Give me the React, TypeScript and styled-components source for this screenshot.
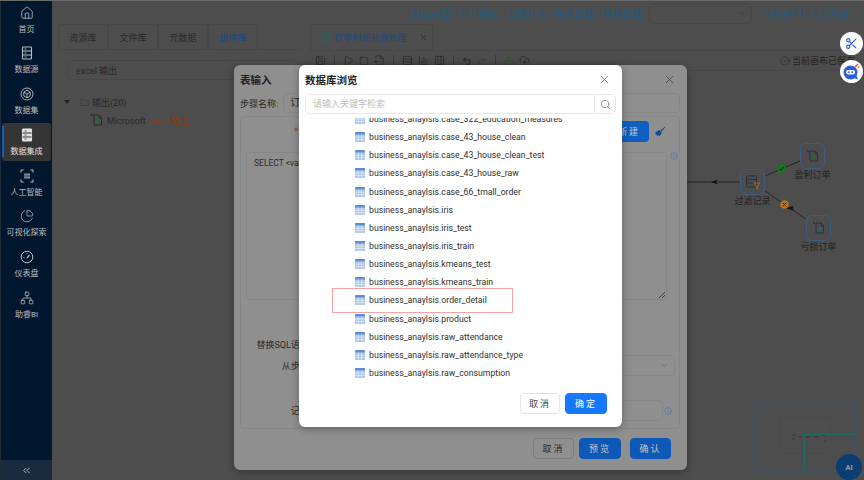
import React from 'react';
import styled, { createGlobalStyle } from 'styled-components';
import {
  BarChart3,
  ChartPie,
  ChevronDown,
  ChevronsLeft,
  CircleCheck,
  CloudUpload,
  Columns3,
  FileOutput,
  Folder,
  Info,
  House,
  LockOpen,
  Network,
  Play,
  Redo2,
  Rows3,
  Save,
  Scissors,
  Search,
  Square,
  Undo2,
  X,
} from 'lucide-react';

const FONT = 'Roboto, "Noto Sans CJK SC", sans-serif';

const GlobalStyle = createGlobalStyle`
  html, body {
    margin: 0;
    padding: 0;
    width: 864px;
    height: 480px;
    overflow: hidden;
    background: #4d4d4d;
    font-family: ${FONT};
  }
  * { box-sizing: border-box; }
`;

const Page = styled.div`
  position: relative;
  display: flex;
  width: 864px;
  height: 480px;
  overflow: hidden;
  background: #4d4d4d;
  border-top: 1px solid #6a6a6a;
`;

/* sidebar */
const Sidebar = styled.nav`
  display: flex;
  flex-direction: column;
  width: 52px;
  flex: none;
  background: #00172e;
  border-left: 1px solid #1e2a38;
`;

const SideList = styled.div`
  display: flex;
  flex-direction: column;
  gap: 2.8px;
  flex: 1;
  padding: 0 1px;
`;

const SideItem = styled.div<{ $active?: boolean }>`
  position: relative;
  display: flex;
  flex-direction: column;
  align-items: center;
  justify-content: center;
  gap: 5px;
  height: 38px;
  flex: none;
  border-radius: 3px;
  font-size: 8px;
  line-height: 10px;
  white-space: nowrap;
  color: ${(p) => (p.$active ? '#e2e2e2' : '#b9bec4')};
  background: ${(p) => (p.$active ? '#353535' : 'transparent')};

  ${(p) =>
    p.$active &&
    `&::before {
      content: '';
      position: absolute;
      left: 0;
      top: 3px;
      bottom: 4px;
      width: 2px;
      background: #0f5fc2;
    }`}
`;

const Collapse = styled.div`
  display: flex;
  align-items: center;
  justify-content: center;
  height: 20px;
  background: #1a2b40;
  color: #b9bec4;
`;

/* main */
const Main = styled.main`
  display: flex;
  flex-direction: column;
  flex: 1;
  min-width: 0;
`;

const Header = styled.header`
  display: flex;
  align-items: center;
  justify-content: flex-end;
  height: 23px;
  padding: 2px 4px 0 0;
  color: #205a7e;
  font-size: 10px;
`;

const NavLinks = styled.div`
  display: flex;
  gap: 7.7px;
  margin-right: 7px;
`;

const ProjectSelect = styled.div`
  display: flex;
  align-items: center;
  justify-content: flex-end;
  width: 103px;
  height: 20px;
  padding-right: 5px;
  border: 1px solid #474747;
  border-radius: 4px;
  color: #3c3c3c;
`;

const ProjectName = styled.div`
  display: flex;
  align-items: center;
  gap: 3px;
  width: 100px;
  margin-left: 8px;
  white-space: nowrap;
`;

const Workspace = styled.div`
  display: flex;
  flex: 1;
  min-height: 0;
`;

const LeftPanel = styled.section`
  width: 248px;
  flex: none;
  padding: 0 0 0 6px;
`;

const Tabs = styled.div`
  display: flex;
  height: 26px;
  border-bottom: 1px solid #474747;
`;

const Tab = styled.div<{ $active?: boolean }>`
  display: flex;
  align-items: center;
  justify-content: center;
  width: 50px;
  border: 1px solid #474747;
  border-bottom: none;
  border-radius: 3px 3px 0 0;
  font-size: 9px;
  color: ${(p) => (p.$active ? '#1a4a80' : '#2a2a2a')};
`;

const KeywordBox = styled.div`
  display: flex;
  align-items: center;
  height: 20px;
  margin: 10px 2px 0 9px;
  padding-left: 8px;
  border: 1px solid #474747;
  border-radius: 4px;
  font-size: 9px;
  color: #2a2a2a;
`;

const TreeRow = styled.div<{ $indent: number }>`
  display: flex;
  align-items: center;
  gap: 3px;
  height: 18px;
  padding-left: ${(p) => p.$indent}px;
  font-size: 9px;
  color: #2a2a2a;
`;

const TreeFirst = styled(TreeRow)`
  margin-top: 13px;
`;

const Caret = styled.span`
  width: 0;
  height: 0;
  margin-right: 7px;
  border: 3px solid transparent;
  border-top: 4px solid #222;
  border-bottom: none;
`;

const Hit = styled.span`
  color: #8c3b14;
`;

const RightPanel = styled.section`
  display: flex;
  flex-direction: column;
  flex: 1;
  min-width: 0;
  padding-left: 10px;
`;

const FlowTab = styled.div`
  display: flex;
  align-items: center;
  gap: 1px;
  width: 123px;
  height: 26px;
  padding-left: 10px;
  border: 1px solid #474747;
  border-bottom: none;
  border-radius: 3px 3px 0 0;
  font-size: 9px;
  color: #1a4a80;
`;

const FlowClose = styled.span`
  display: flex;
  margin-left: 12px;
  color: #2e2e2e;
`;

const Toolbar = styled.div`
  display: flex;
  align-items: center;
  gap: 5px;
  height: 20px;
  padding: 0 9px 0 5px;
  border-top: 1px solid #474747;
  color: #242424;
`;

const ToolDivider = styled.span`
  width: 1px;
  height: 11px;
  margin: 0 3px;
  background: #3a3a3a;
`;

const SavedNote = styled.div`
  display: flex;
  align-items: center;
  gap: 2px;
  margin-left: auto;
  font-size: 9px;
  white-space: nowrap;
  color: #222;
`;

const Canvas = styled.div`
  position: relative;
  flex: 1;
  border-top: 1px solid #474747;
  margin-left: -4px;
  background-image: radial-gradient(#414141 0.7px, transparent 0.8px);
  background-size: 17px 17px;
`;

const Edges = styled.svg`
  position: absolute;
  left: 0;
  top: 0;
`;

const Node = styled.div<{ $x: number; $y: number }>`
  position: absolute;
  left: ${(p) => p.$x}px;
  top: ${(p) => p.$y}px;
  display: flex;
  flex-direction: column;
  align-items: center;
  width: 25px;
  font-size: 9px;
  line-height: 11px;
  white-space: nowrap;
  color: #222;
`;

const NodeBox = styled.div`
  display: flex;
  align-items: center;
  justify-content: center;
  width: 25px;
  height: 26px;
  margin-bottom: 1px;
  border: 1px solid #3f5a80;
  border-radius: 6px;
  color: #243240;
  background: #4d4d4d;
`;

const NodeBadge = styled.span<{ $x: number; $y: number }>`
  position: absolute;
  left: ${(p) => p.$x}px;
  top: ${(p) => p.$y}px;
  display: flex;
`;

const MiniMap = styled.div`
  position: absolute;
  left: 450px;
  top: 331px;
  width: 99px;
  height: 69px;
  border: 1px solid #455060;
`;

const MiniContent = styled.div`
  position: absolute;
  left: 23px;
  top: 13px;
  width: 51px;
  height: 38px;
  border: 1px solid #4a4a4a;
`;

const MiniGraph = styled.svg`
  position: absolute;
  left: 34px;
  top: 29px;
`;

const MiniView = styled.div`
  position: absolute;
  left: 47px;
  top: 31px;
  right: -1px;
  bottom: -1px;
  border-left: 1px solid #1a6e62;
  border-top: 1px solid #1a6e62;
`;

const RoundTool = styled.div<{ $top: number }>`
  position: absolute;
  left: 840px;
  top: ${(p) => p.$top}px;
  display: flex;
  align-items: center;
  justify-content: center;
  width: 23px;
  height: 23px;
  border-radius: 50%;
  background: #fff;
  color: #2b5fe0;
`;

const AiBubble = styled.div`
  position: absolute;
  left: 836px;
  top: 453px;
  display: flex;
  align-items: center;
  justify-content: center;
  width: 26px;
  height: 26px;
  border-radius: 50%;
  background: #0a3d70;
  color: #8f9fb0;
  font-size: 8px;
  font-weight: 700;
`;

/* dialogs */
const Modal = styled.div<{ $x: number; $y: number; $w: number; $h: number; $bg: string }>`
  position: absolute;
  left: ${(p) => p.$x}px;
  top: ${(p) => p.$y}px;
  display: flex;
  flex-direction: column;
  width: ${(p) => p.$w}px;
  height: ${(p) => p.$h}px;
  border-radius: 6px;
  background: ${(p) => p.$bg};
  box-shadow: 0 2px 8px rgba(0, 0, 0, 0.3);
`;

const ModalHead = styled.div<{ $color: string }>`
  display: flex;
  align-items: center;
  justify-content: space-between;
  height: 28px;
  padding: 0 11px 0 6px;
  font-size: 10.5px;
  font-weight: 700;
  color: #1e1e1e;

  svg {
    color: ${(p) => p.$color};
  }
`;

const NameRow = styled.div`
  display: flex;
  align-items: center;
  gap: 5px;
  height: 20px;
  padding: 0 7px 0 6px;
  font-size: 9px;
  color: #2b2b2b;
`;

const DimInput = styled.div`
  flex: 1;
  height: 100%;
  padding: 3px 6px;
  border: 1px solid #878787;
  border-radius: 4px;
  font-size: 10px;
  line-height: 12px;
`;

const FormCard = styled.div`
  display: flex;
  flex-direction: column;
  height: 313px;
  margin: 3px 7px 0 6px;
  padding: 5px 0 0 5px;
  border: 1px solid #878787;
  border-radius: 4px;
`;

const SqlHead = styled.div`
  display: flex;
  align-items: center;
  height: 21px;
  margin-top: -1px;
  padding: 0 8px 0 48px;
  color: #a83e3e;
  font-size: 10px;
`;

const NewButton = styled.div`
  display: flex;
  align-items: center;
  justify-content: center;
  margin-left: auto;
  width: 40px;
  height: 21px;
  border-radius: 4px;
  background: #0f5fc2;
  color: #c6c6c6;
  font-size: 9px;
  letter-spacing: 2px;
`;

const BrushMark = styled.span`
  display: flex;
  width: 22px;
  justify-content: center;
  color: #0f4f9a;
`;

const SqlRow = styled.div`
  display: flex;
  gap: 3px;
  margin-top: 10px;
`;

const SqlArea = styled.div`
  position: relative;
  width: 421px;
  height: 148px;
  padding: 5px 7px;
  border: 1px solid #878787;
  border-radius: 3px;
  font-size: 8.5px;
  color: #2b2b2b;
`;

const Grip = styled.span`
  position: absolute;
  right: 1px;
  bottom: 1px;
  width: 6px;
  height: 6px;
  background: linear-gradient(135deg, transparent 45%, #444 46%, #444 56%, transparent 57%, transparent 70%, #444 71%, #444 82%, transparent 83%);
`;

const FormRow = styled.div<{ $gap: number }>`
  display: flex;
  align-items: center;
  height: 21px;
  margin-top: ${(p) => p.$gap}px;
  font-size: 9px;
  color: #2b2b2b;
`;

const FormLabel = styled.span`
  width: 101px;
  flex: none;
  text-align: right;
  white-space: nowrap;
`;

const DimSelect = styled.div`
  display: flex;
  align-items: center;
  justify-content: flex-end;
  width: 328px;
  height: 21px;
  padding-right: 5px;
  border: 1px solid #878787;
  border-radius: 4px;
  color: #6c6c6c;
`;

const DimLimit = styled.div`
  width: 316px;
  height: 21px;
  margin-right: 1px;
  border: 1px solid #878787;
  border-radius: 4px;
`;

const ModalFoot = styled.div`
  display: flex;
  justify-content: flex-end;
  gap: 5px;
  margin-top: 9px;
  padding-right: 16px;
`;

const DimButton = styled.div<{ $primary?: boolean; $w: number; $ml?: number }>`
  display: flex;
  align-items: center;
  justify-content: center;
  width: ${(p) => p.$w}px;
  height: 21px;
  margin-left: ${(p) => p.$ml ?? 0}px;
  border-radius: 4px;
  font-size: 9px;
  letter-spacing: 2px;
  border: 1px solid ${(p) => (p.$primary ? '#0e58b8' : '#7d7d7d')};
  background: ${(p) => (p.$primary ? '#0e58b8' : 'transparent')};
  color: ${(p) => (p.$primary ? '#c6c6c6' : '#2b2b2b')};
`;

const SearchBar = styled.div`
  display: flex;
  height: 20px;
  margin: 1px 6px 0;
  border: 1px solid #e8e8e8;
  border-radius: 5px;
  font-size: 9px;
  color: #bdbdbd;
`;

const SearchText = styled.div`
  flex: 1;
  padding: 3px 7px;
  line-height: 13px;
`;

const SearchButton = styled.div`
  display: flex;
  align-items: center;
  justify-content: center;
  width: 21px;
  border-left: 1px solid #e8e8e8;
  color: #8a8a8a;
`;

const TableViewport = styled.div`
  height: 263px;
  margin-top: 4px;
  overflow: hidden;
`;

const TableList = styled.ul`
  margin: -8px 0 0;
  padding: 0 0 0 56px;
  list-style: none;
`;

const TableRow = styled.li<{ $marked?: boolean }>`
  position: relative;
  display: flex;
  align-items: center;
  gap: 4px;
  height: 18.15px;
  font-size: 8.7px;
  white-space: nowrap;
  color: #2f2f2f;

  ${(p) =>
    p.$marked &&
    `&::after {
      content: '';
      position: absolute;
      left: -23px;
      top: -3px;
      width: 179px;
      height: 23px;
      border: 1px solid #f5a3a3;
    }`}
`;

const DialogFoot = styled.div`
  display: flex;
  justify-content: flex-end;
  gap: 5px;
  margin-top: 12px;
  padding-right: 15px;
`;

const FootButton = styled.div<{ $primary?: boolean }>`
  display: flex;
  align-items: center;
  justify-content: center;
  width: ${(p) => (p.$primary ? 42 : 40)}px;
  height: 21px;
  border-radius: 4px;
  font-size: 9px;
  letter-spacing: 2px;
  border: 1px solid ${(p) => (p.$primary ? '#1677ff' : '#e4e4e4')};
  background: ${(p) => (p.$primary ? '#1677ff' : '#fff')};
  color: ${(p) => (p.$primary ? '#fff' : '#444')};
`;

const SourceIcon = ({ bold }: { bold?: boolean }) => (
  <svg width="14" height="14" viewBox="0 0 14 14" fill={bold ? 'currentColor' : 'none'} stroke="currentColor" strokeWidth="1.1">
    <rect x="2.500" y="1" width="9" height="12" rx="0.800" />
    <path d="M2.500 5h9M2.500 9h9" stroke={bold ? '#353535' : 'currentColor'} />
    <path d="M4.500 3h2M4.500 7h2M4.500 11h2" strokeWidth="0.8" stroke={bold ? '#353535' : 'currentColor'} />
  </svg>
);

const CubeIcon = () => (
  <svg width="14" height="14" viewBox="0 0 14 14" fill="none" stroke="currentColor" strokeWidth="0.9">
    <circle cx="7" cy="7" r="6" />
    <path d="M7 3.200l3.200 1.900v3.800L7 10.800 3.800 8.900V5.100zM3.800 5.100L7 7l3.200-1.900M7 7v3.800" />
  </svg>
);

const ScanIcon = () => (
  <svg width="14" height="14" viewBox="0 0 14 14" fill="none" stroke="currentColor" strokeWidth="1">
    <path d="M1 3.500V1h2.500M10.500 1H13v2.500M13 10.500V13h-2.500M3.500 13H1v-2.500" />
    <rect x="4" y="4.500" width="6" height="5" fill="currentColor" stroke="none" opacity="0.7" />
    <path d="M4 7h6" stroke="#00172e" strokeWidth="0.7" />
  </svg>
);

const DialIcon = () => (
  <svg width="14" height="14" viewBox="0 0 14 14" fill="none" stroke="currentColor" strokeWidth="1">
    <circle cx="7" cy="7" r="5.800" />
    <path d="M7 8l2.500-3" strokeWidth="1.200" />
    <path d="M3.500 7.500h1M7 3v1" strokeWidth="0.800" />
  </svg>
);

const SIDE_ITEMS = [
  { label: '首页', icon: <House size={14} strokeWidth={1.4} /> },
  { label: '数据源', icon: <SourceIcon /> },
  { label: '数据集', icon: <CubeIcon /> },
  { label: '数据集成', icon: <SourceIcon bold />, active: true },
  { label: '人工智能', icon: <ScanIcon /> },
  { label: '可视化探索', icon: <ChartPie size={14} strokeWidth={1.3} /> },
  { label: '仪表盘', icon: <DialIcon /> },
  { label: '助睿BI', icon: <Network size={14} strokeWidth={1.3} /> },
];

const NAV_LINKS = ['数据探查', '公共空间', '调度计划', '任务管理', '环境管理'];

const TABLES = [
  'business_anaylsis.case_322_education_measures',
  'business_anaylsis.case_43_house_clean',
  'business_anaylsis.case_43_house_clean_test',
  'business_anaylsis.case_43_house_raw',
  'business_anaylsis.case_66_tmall_order',
  'business_anaylsis.iris',
  'business_anaylsis.iris_test',
  'business_anaylsis.iris_train',
  'business_anaylsis.kmeans_test',
  'business_anaylsis.kmeans_train',
  'business_anaylsis.order_detail',
  'business_anaylsis.product',
  'business_anaylsis.raw_attendance',
  'business_anaylsis.raw_attendance_type',
  'business_anaylsis.raw_consumption',
];

const TableIcon = () => (
  <svg width="10" height="10" viewBox="0 0 10 10" style={{ flex: 'none' }}>
    <rect width="10" height="10" rx="1" fill="#a9c3ea" />
    <rect width="10" height="2.600" rx="1" fill="#5c8ed8" />
    <path d="M0 5.200h10M0 7.600h10M3.300 2.600V10M6.700 2.600V10" stroke="#f4f7fd" strokeWidth="0.600" />
  </svg>
);

const ExcelIcon = () => (
  <svg width="14" height="14" viewBox="0 0 14 14" fill="none" stroke="currentColor" strokeWidth="1">
    <path d="M4 2h5l2.500 2.500V12H4z" />
    <path d="M9 2v3h2.500" />
    <path d="M1 1l2 2" strokeWidth="1.400" />
    <path d="M6 6.500l2.600 3.500M8.600 6.500L6 10" stroke="#2e6b3f" />
  </svg>
);

const FilterIcon = () => (
  <svg width="16" height="16" viewBox="0 0 16 16" fill="none" stroke="currentColor" strokeWidth="1">
    <rect x="1.500" y="2" width="10" height="11" rx="1" />
    <path d="M1.500 5.500h10M1.500 9h10" />
    <path d="M9 9h6l-2.300 3v3l-1.400-1v-2z" stroke="#a36a1c" />
  </svg>
);

const FlowMark = () => (
  <svg width="12" height="10" viewBox="0 0 12 10" fill="none" stroke="#1c6e62" strokeWidth="1">
    <path d="M1 2c2-1.500 3 1 5 0s3-1 5-1M1 5c2-1.500 3 1 5 0s3-1 5-1M1 8c2-1.500 3 1 5 0s3-1 5-1" />
  </svg>
);

const BotIcon = () => (
  <svg width="19" height="19" viewBox="0 0 19 19">
    <circle cx="8.500" cy="10.500" r="7" fill="#2b5fe0" />
    <path d="M12 16l4 1.500-1.500-4z" fill="#2b5fe0" />
    <rect x="4" y="8" width="9" height="4.500" rx="2.200" fill="#fff" />
    <circle cx="6.700" cy="10.200" r="0.900" fill="#2b5fe0" />
    <circle cx="10.300" cy="10.200" r="0.900" fill="#2b5fe0" />
    <path d="M13 5l3-3" stroke="#e8553f" strokeWidth="1.500" />
    <circle cx="16.500" cy="5" r="1" fill="#f08a3c" />
  </svg>
);

const BrushIcon = () => (
  <svg width="12" height="12" viewBox="0 0 12 12" fill="currentColor">
    <path d="M11 .5L6.500 4.500l1 1L11.500 1z" />
    <path d="M5.500 4L1 6.500l1 1-1 1.500 1.500-.5.500 1.500L4.500 9l1 1.500L8 6.500z" />
  </svg>
);

const App: React.FC = () => (
  <Page>
    <GlobalStyle />
    <Sidebar>
      <SideList>
        {SIDE_ITEMS.map((item) => (
          <SideItem key={item.label} $active={item.active}>
            {item.icon}
            <span>{item.label}</span>
          </SideItem>
        ))}
      </SideList>
      <Collapse>
        <ChevronsLeft size={11} />
      </Collapse>
    </Sidebar>

    <Main>
      <Header>
        <NavLinks>
          {NAV_LINKS.map((link) => (
            <span key={link}>{link}</span>
          ))}
        </NavLinks>
        <ProjectSelect>
          <ChevronDown size={9} />
        </ProjectSelect>
        <ProjectName>
          <Columns3 size={10} />
          助睿ETL入门实验 ...
        </ProjectName>
      </Header>

      <Workspace>
        <LeftPanel>
          <Tabs>
            <Tab>资源库</Tab>
            <Tab>文件库</Tab>
            <Tab>元数据</Tab>
            <Tab $active>组件库</Tab>
          </Tabs>
          <KeywordBox>excel 输出</KeywordBox>
          <TreeFirst $indent={6}>
            <Caret />
            <Folder size={9} strokeWidth={1} />
            <span>输出(20)</span>
          </TreeFirst>
          <TreeRow $indent={32}>
            <ExcelIcon />
            <span>
              Microsoft <Hit>excel 输出</Hit>
            </span>
          </TreeRow>
        </LeftPanel>

        <RightPanel>
          <FlowTab>
            <FlowMark />
            订单利润分流处理
            <FlowClose>
              <X size={9} />
            </FlowClose>
          </FlowTab>
          <Toolbar>
            <Save size={11} strokeWidth={1.4} />
            <ToolDivider />
            <Play size={11} strokeWidth={1.4} />
            <Square size={10} strokeWidth={1.4} />
            <FileOutput size={11} strokeWidth={1.4} />
            <ToolDivider />
            <Rows3 size={11} strokeWidth={1.4} />
            <BarChart3 size={11} strokeWidth={1.4} />
            <Columns3 size={11} strokeWidth={1.4} />
            <ToolDivider />
            <Undo2 size={10} strokeWidth={2} />
            <Redo2 size={10} strokeWidth={1.4} color="#3c3c3c" />
            <ToolDivider />
            <LockOpen size={10} strokeWidth={1.6} color="#1d5a2a" />
            <CloudUpload size={11} strokeWidth={1.4} />
            <SavedNote>
              <CircleCheck size={10} strokeWidth={1.2} />
              当前画布已保存
            </SavedNote>
          </Toolbar>
          <Canvas>
            <Edges width="560" height="410" fill="none" stroke="#1c1c1c" strokeWidth="0.8">
              <path d="M380 111H434" />
              <path d="M405 111l7-2.500-2 2.500 2 2.500z" fill="#111" stroke="none" />
              <path d="M459 105l35-15" />
              <path d="M459 120l41 28" />
              <path d="M481 137l7 2.500-1.500-1 .5-3z" fill="#111" />
            </Edges>
            <Node $x={434} $y={98}>
              <NodeBox>
                <FilterIcon />
              </NodeBox>
              过滤记录
            </Node>
            <Node $x={494} $y={72}>
              <NodeBox>
                <ExcelIcon />
              </NodeBox>
              盈利订单
            </Node>
            <Node $x={500} $y={144}>
              <NodeBox>
                <ExcelIcon />
              </NodeBox>
              亏损订单
            </Node>
            <NodeBadge $x={471} $y={93}>
              <svg width="9" height="9" viewBox="0 0 9 9">
                <circle cx="4.500" cy="4.500" r="4.300" fill="#127a1c" />
                <path d="M2.300 4.600l1.600 1.600 2.900-3" stroke="#0a2c0e" strokeWidth="1" fill="none" />
              </svg>
            </NodeBadge>
            <NodeBadge $x={474} $y={129}>
              <svg width="9" height="9" viewBox="0 0 9 9">
                <circle cx="4.500" cy="4.500" r="4.300" fill="#b8720f" />
                <path d="M2.800 2.800l3.400 3.400M6.200 2.800L2.800 6.200" stroke="#4a2c05" strokeWidth="1" />
              </svg>
            </NodeBadge>
            <MiniMap>
              <MiniContent />
              <MiniGraph width="40" height="12" viewBox="0 0 40 12" fill="none" stroke="#333" strokeWidth="0.8">
                <path d="M1 3h3M1 7h3M7 5h4M14 5h5M23 5h5M31 3h3M33 9h3" />
              </MiniGraph>
              <MiniView />
            </MiniMap>
          </Canvas>
        </RightPanel>
      </Workspace>
    </Main>

    <RoundTool $top={31}>
      <Scissors size={13} strokeWidth={2.2} />
    </RoundTool>
    <RoundTool $top={59}>
      <BotIcon />
    </RoundTool>
    <AiBubble>AI</AiBubble>

    <Modal $x={234} $y={64} $w={453} $h={405} $bg="#8f8f8f">
      <ModalHead $color="#4a4a4a">
        表输入
        <X size={13} strokeWidth={1.5} />
      </ModalHead>
      <NameRow>
        步骤名称:
        <DimInput>订单</DimInput>
      </NameRow>
      <FormCard>
        <SqlHead>
          *
          <NewButton>新建</NewButton>
          <BrushMark>
            <BrushIcon />
          </BrushMark>
        </SqlHead>
        <SqlRow>
          <SqlArea>
            SELECT &lt;values&gt; FROM &lt;table name&gt;
            <Grip />
          </SqlArea>
          <Info size={8} color="#3f78b8" />
        </SqlRow>
        <FormRow $gap={34}>
          <FormLabel>替换SQL语句中的变量:</FormLabel>
        </FormRow>
        <FormRow $gap={0}>
          <FormLabel>从步骤插入数据:</FormLabel>
          <DimSelect>
            <ChevronDown size={9} />
          </DimSelect>
        </FormRow>
        <FormRow $gap={24}>
          <FormLabel>记录数量限制:</FormLabel>
          <DimLimit />
          <Info size={8} color="#3f78b8" />
        </FormRow>
      </FormCard>
      <ModalFoot>
        <DimButton $w={41}>取消</DimButton>
        <DimButton $w={42} $primary>预览</DimButton>
        <DimButton $w={41} $primary $ml={4}>确认</DimButton>
      </ModalFoot>
    </Modal>

    <Modal $x={299} $y={64} $w={323} $h={362} $bg="#fff">
      <ModalHead $color="#6a6a6a">
        数据库浏览
        <X size={13} strokeWidth={1.5} />
      </ModalHead>
      <SearchBar>
        <SearchText>请输入关键字检索</SearchText>
        <SearchButton>
          <Search size={11} />
        </SearchButton>
      </SearchBar>
      <TableViewport>
        <TableList>
          {TABLES.map((name) => (
            <TableRow key={name} $marked={name.endsWith('order_detail')}>
              <TableIcon />
              {name}
            </TableRow>
          ))}
        </TableList>
      </TableViewport>
      <DialogFoot>
        <FootButton>取消</FootButton>
        <FootButton $primary>确定</FootButton>
      </DialogFoot>
    </Modal>
  </Page>
);

export default App;
